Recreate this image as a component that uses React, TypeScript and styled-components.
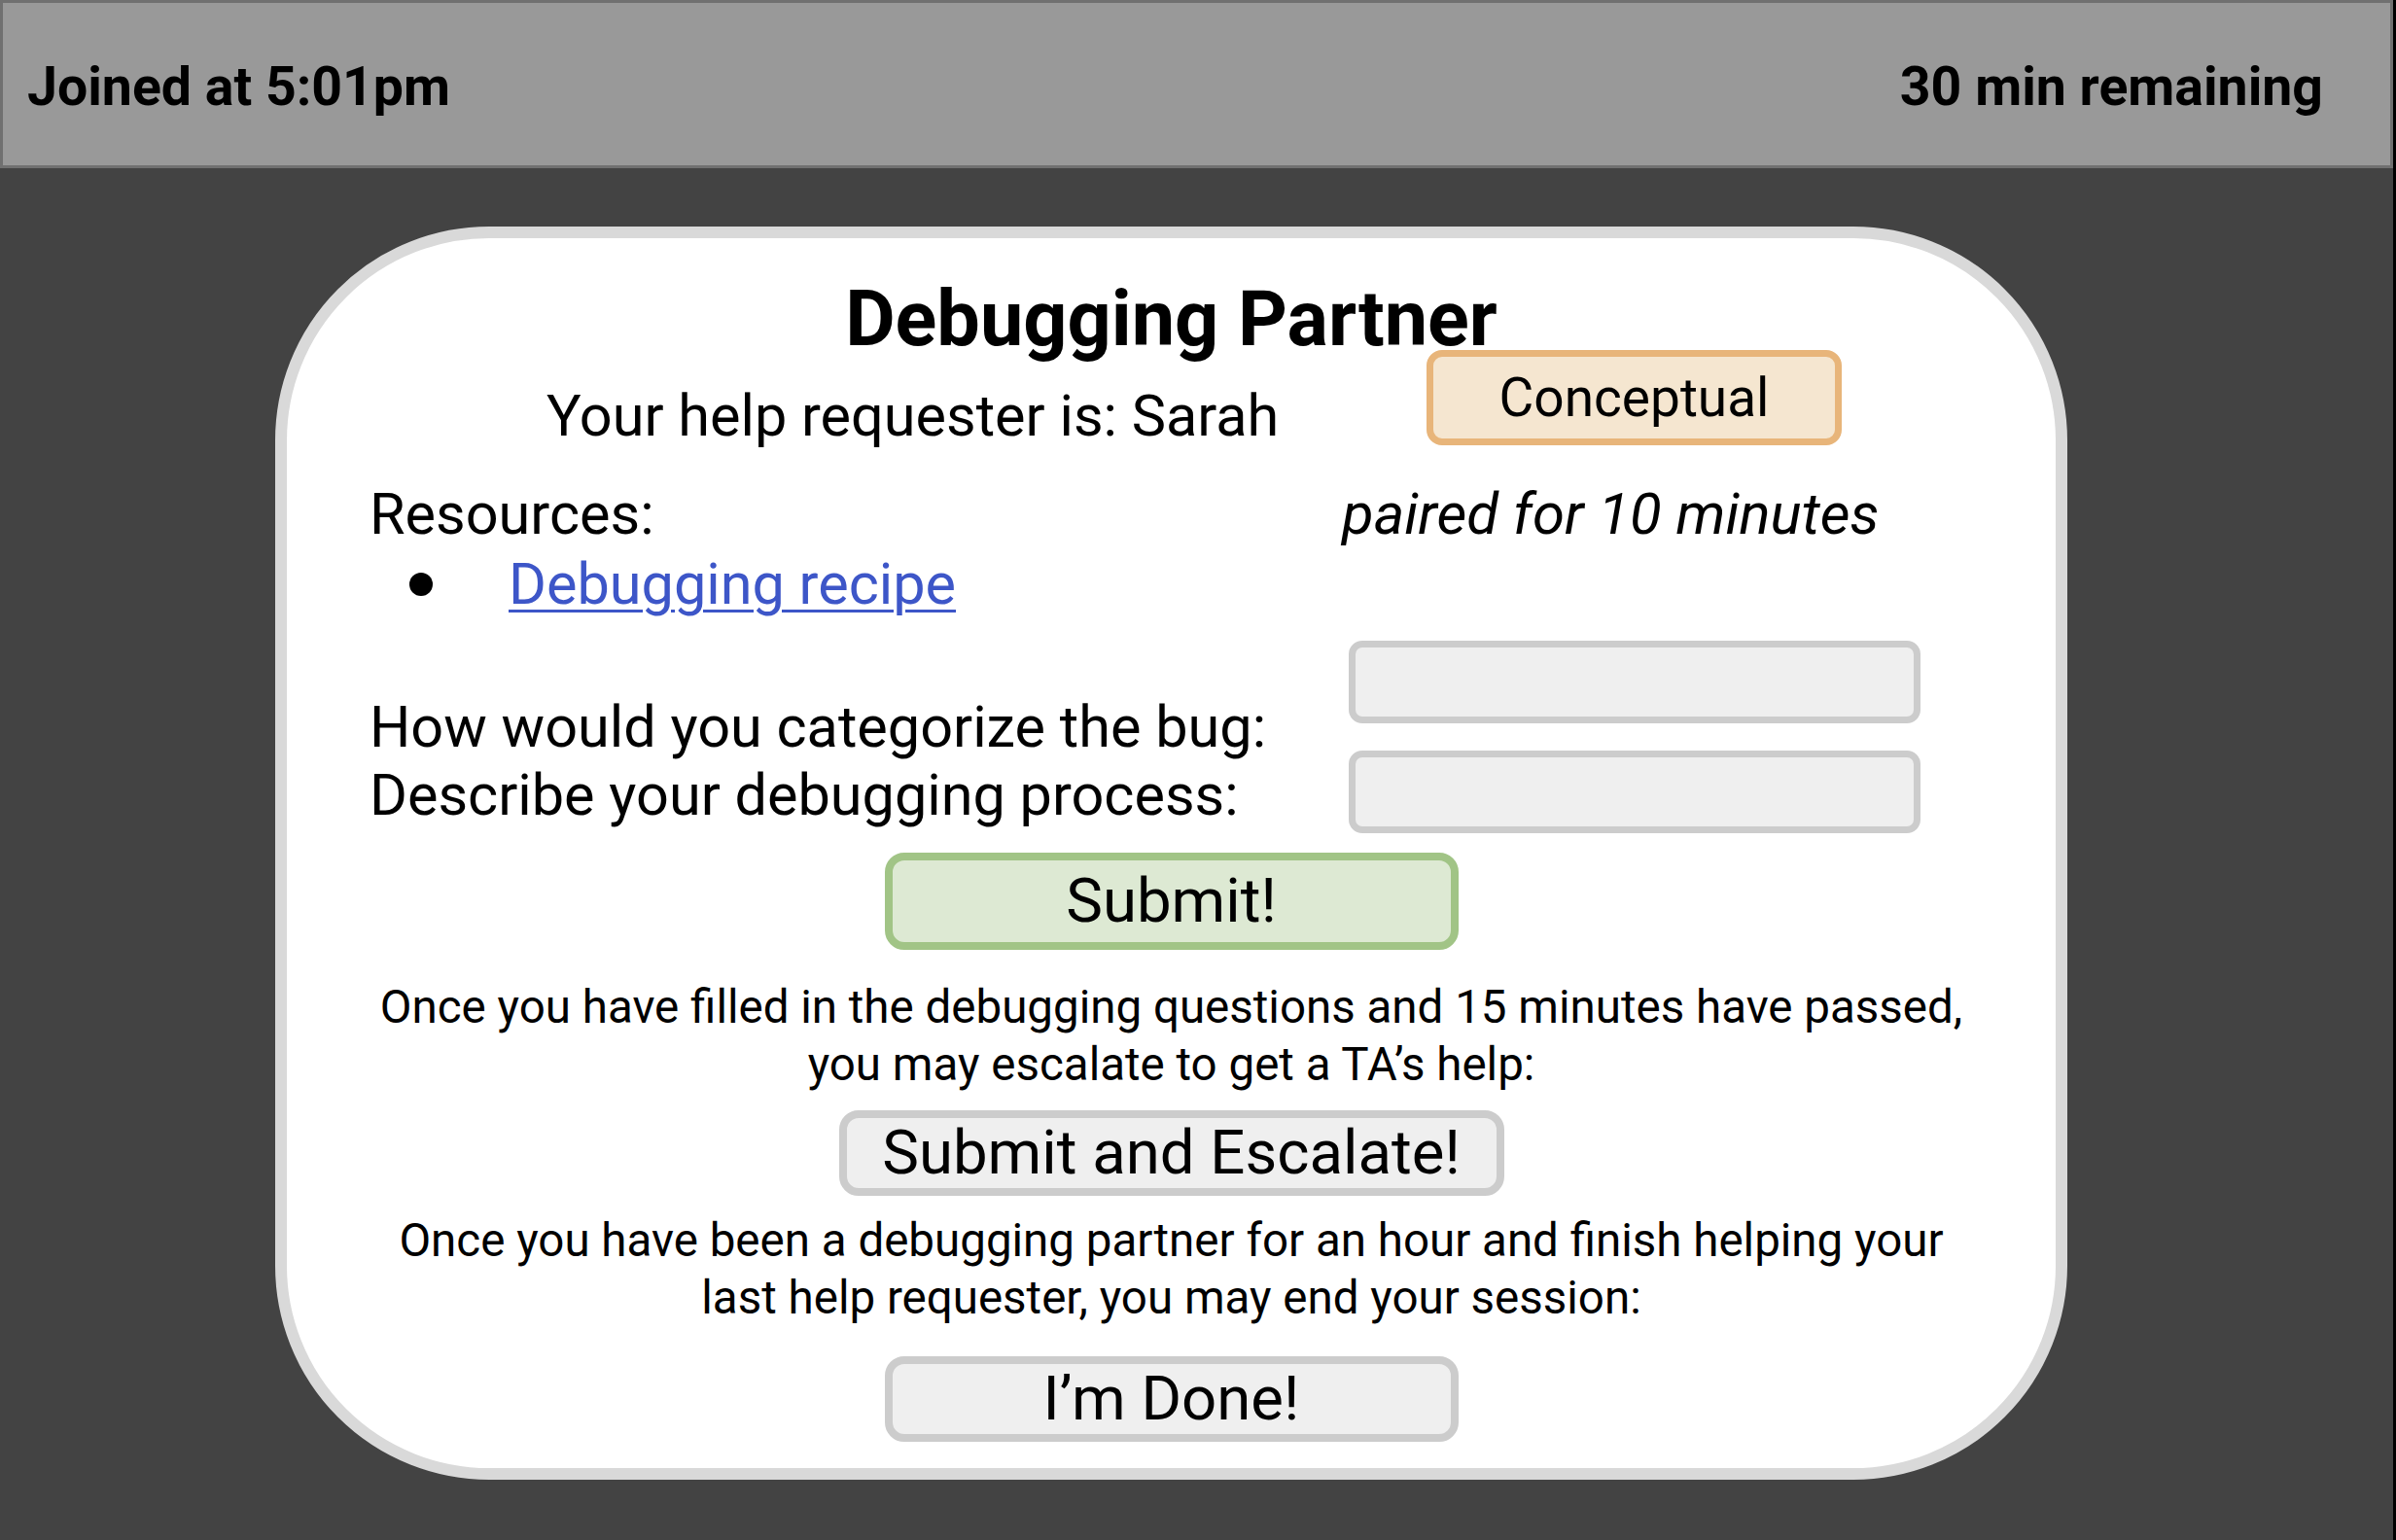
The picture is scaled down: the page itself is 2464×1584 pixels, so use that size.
import React from "react";
import styled, { createGlobalStyle } from "styled-components";

const Global = createGlobalStyle`
  html, body { margin: 0; padding: 0; background: #434343; }
  body { font-family: Roboto, "Noto Sans", "Liberation Sans", Arial, sans-serif; color: #000; }
  * { box-sizing: border-box; }
`;

const Page = styled.div`
  width: 2464px;
  height: 1584px;
  background: #434343;
  border-right: 3px solid #000;
  overflow: hidden;
`;

const Header = styled.header`
  height: 173px;
  background: #999999;
  border: 3px solid #707070;
  display: flex;
  align-items: center;
  justify-content: space-between;
  padding: 6px 69px 0 25px;
`;

const HeaderText = styled.span`
  font-size: 55.4px;
  font-weight: 700;
`;

const Card = styled.main`
  margin: 60px 0 0 283px;
  width: 1843px;
  border: 12px solid #d9d9d9;
  border-radius: 220px;
  background: #fff;
  padding: 51px 0 27px;
  display: flex;
  flex-direction: column;
`;

const Title = styled.h1`
  margin: 0;
  font-size: 79.2px;
  font-weight: 700;
  line-height: 64px;
  text-align: center;
`;

const RequesterRow = styled.div`
  display: grid;
  grid-template-columns: 1172px 427px;
  align-items: start;
`;

const BodyText = styled.div<{ $italic?: boolean }>`
  font-size: ${(p) => (p.$italic ? "59.9px" : "59.4px")};
  line-height: 70px;
  white-space: nowrap;
  font-style: ${(p) => (p.$italic ? "italic" : "normal")};
`;

const Requester = styled(BodyText)`
  padding-left: 267px;
  margin-top: 33px;
`;

const Tag = styled.div`
  height: 98px;
  border: 7px solid #e8b57a;
  background: #f5e6d0;
  border-radius: 16px;
  display: flex;
  align-items: center;
  justify-content: center;
  font-size: 55px;
`;

const InfoGrid = styled.div`
  display: grid;
  grid-template-columns: 1000px 600px;
  padding-left: 85px;
  margin-top: 31px;
`;

const LinkRow = styled.div`
  display: flex;
  align-items: center;
  padding-left: 41px;
  gap: 78px;
  margin-top: 2px;
  height: 70px;
`;

const Bullet = styled.span`
  width: 24px;
  height: 24px;
  border-radius: 50%;
  background: #000;
  flex: none;
`;

const Link = styled.a`
  font-size: 59.4px;
  line-height: 70px;
  color: #3d56c8;
  text-decoration: underline;
  text-decoration-thickness: 3px;
  text-underline-offset: 6px;
`;

const Labels = styled(BodyText)`
  align-self: end;
  margin-bottom: 4px;
`;

const Inputs = styled.div`
  display: flex;
  flex-direction: column;
  gap: 28px;
  margin: 23px 0 0 7px;
`;

const Field = styled.input`
  width: 588px;
  height: 85px;
  border: 7px solid #cccccc;
  background: #efefef;
  border-radius: 14px;
  outline: none;
  font-size: 40px;
  font-family: inherit;
`;

const Button = styled.button<{ $tone?: "green" | "gray"; $w: number; $h: number; $mt: number }>`
  align-self: center;
  width: ${(p) => p.$w}px;
  height: ${(p) => p.$h}px;
  margin-top: ${(p) => p.$mt}px;
  border: 8px solid ${(p) => (p.$tone === "green" ? "#a1c486" : "#cccccc")};
  background: ${(p) => (p.$tone === "green" ? "#dde9d3" : "#efefef")};
  border-radius: 20px;
  font-family: inherit;
  font-size: 63.5px;
  line-height: 1;
  color: #000;
  padding: 0;
  display: flex;
  align-items: center;
  justify-content: center;
  cursor: pointer;
`;

const Note = styled.p<{ $mt: number; $lh: number }>`
  margin: ${(p) => p.$mt}px 0 0;
  font-size: 47.5px;
  line-height: ${(p) => p.$lh}px;
  text-align: center;
  white-space: nowrap;
`;

export default function App() {
  return (
    <Page>
      <Global />
      <Header>
        <HeaderText>Joined at 5:01pm</HeaderText>
        <HeaderText>30 min remaining</HeaderText>
      </Header>
      <Card>
        <Title>Debugging Partner</Title>
        <RequesterRow>
          <Requester>Your help requester is: Sarah</Requester>
          <Tag>Conceptual</Tag>
        </RequesterRow>
        <InfoGrid>
          <BodyText>Resources:</BodyText>
          <BodyText $italic>paired for 10 minutes</BodyText>
          <LinkRow>
            <Bullet />
            <Link href="#">Debugging recipe</Link>
          </LinkRow>
          <div />
          <Labels>
            How would you categorize the bug:
            <br />
            Describe your debugging process:
          </Labels>
          <Inputs>
            <Field type="text" aria-label="Bug category" />
            <Field type="text" aria-label="Debugging process" />
          </Inputs>
        </InfoGrid>
        <Button $tone="green" $w={590} $h={100} $mt={20}>
          Submit!
        </Button>
        <Note $mt={30} $lh={59}>
          Once you have filled in the debugging questions and 15 minutes have passed,
          <br />
          you may escalate to get a TA’s help:
        </Note>
        <Button $tone="gray" $w={684} $h={88} $mt={17}>
          Submit and Escalate!
        </Button>
        <Note $mt={17} $lh={59}>
          Once you have been a debugging partner for an hour and finish helping your
          <br />
          last help requester, you may end your session:
        </Note>
        <Button $tone="gray" $w={590} $h={88} $mt={30}>
          I’m Done!
        </Button>
      </Card>
    </Page>
  );
}
